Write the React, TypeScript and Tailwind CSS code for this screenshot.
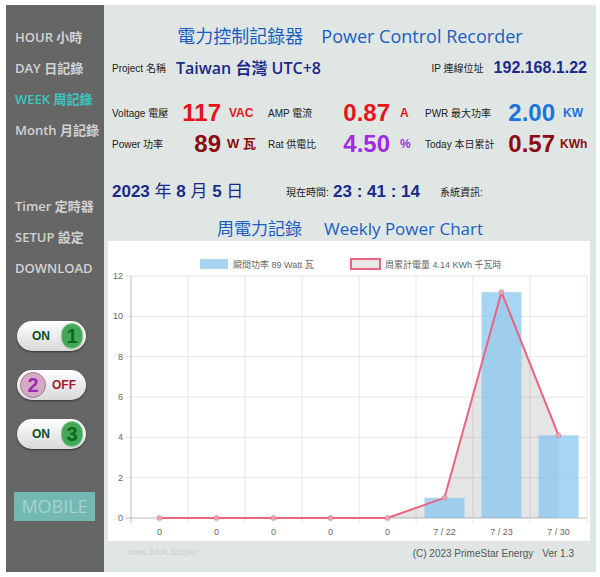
import React from 'react';

const cjk = '"Noto Sans CJK TC"';
const sans = { fontFamily: `"Open Sans", ${cjk}, sans-serif` };
const arial = { fontFamily: `"Liberation Sans", ${cjk}, sans-serif` };

const menuTop = [
  { label: 'HOUR 小時' },
  { label: 'DAY 日記錄' },
  { label: 'WEEK 周記錄', active: true },
  { label: 'Month 月記錄' },
];
const menuBottom = ['Timer 定時器', 'SETUP 設定', 'DOWNLOAD'];

function Toggle({ n, on }: { n: number; on: boolean }) {
  return (
    <div
      className="flex h-[30px] w-[69px] items-center rounded-full bg-gradient-to-b from-white to-[#d9d9d9] shadow-[0_1px_2px_rgba(0,0,0,0.5)] px-[3px]"
      style={arial}
    >
      {on ? (
        <>
          <span className="ml-[12px] w-[35px] text-[12px] font-bold text-[#0f4d1f]">ON</span>
          <span className="flex h-[26px] w-[26px] items-center justify-center rounded-full border border-[#8bc79a] bg-[#43a857] text-[20px] font-bold text-[#0b6a1b]">
            {n}
          </span>
        </>
      ) : (
        <>
          <span className="flex h-[26px] w-[26px] items-center justify-center rounded-full border border-[#9d7d93] bg-[#d6a9c6] text-[20px] font-bold text-[#9a2bb0]">
            {n}
          </span>
          <span className="ml-[6px] text-[12px] font-bold text-[#a01b2c]">OFF</span>
        </>
      )}
    </div>
  );
}

function Metric({
  label,
  labelW,
  value,
  valueW,
  unit,
  unitMl,
  unitW,
  color,
  unitSize = 'text-[12px]',
}: {
  label: string;
  labelW: string;
  value: string;
  valueW: string;
  unit: string;
  unitMl: string;
  unitW: string;
  color: string;
  unitSize?: string;
}) {
  return (
    <div className="flex items-center">
      <span className={`${labelW} text-[10px] text-[#222]`}>{label}</span>
      <span className={`${valueW} text-right text-[24px] font-bold leading-none ${color}`}>{value}</span>
      <span className={`${unitMl} ${unitW} ${unitSize} font-bold ${color}`}>{unit}</span>
    </div>
  );
}

const X0 = 23;
const STEP = 57;
const Y0 = 277;
const PER = (277 - 35) / 12;
const yOf = (v: number) => Y0 - v * PER;
const cx = (i: number) => X0 + STEP / 2 + i * STEP;

const labels = ['0', '0', '0', '0', '0', '7 / 22', '7 / 23', '7 / 30'];
const bars = [0, 0, 0, 0, 0, 1, 11.2, 4.1];
const line = [0, 0, 0, 0, 0, 1, 11.2, 4.1];

function Chart() {
  const pts = line.map((v, i) => `${cx(i)},${yOf(v)}`).join(' ');
  const area = `${cx(0)},${Y0} ${pts} ${cx(7)},${Y0}`;
  return (
    <svg width="482" height="300" className="block" style={arial}>
      <rect x="92" y="18" width="28" height="10" fill="#a9d5f5" />
      <text x="125" y="27" fontSize="9" fill="#666">瞬間功率 89 Watt 瓦</text>
      <rect x="243" y="18" width="29" height="10" fill="#e8e8e8" stroke="#e8647f" strokeWidth="2" />
      <text x="277" y="27" fontSize="9" fill="#666">周累計電量 4.14 KWh 千瓦時</text>

      {Array.from({ length: 7 }).map((_, k) => (
        <g key={k}>
          <line x1={X0 - 5} x2={X0 + STEP * 8} y1={yOf(k * 2)} y2={yOf(k * 2)} stroke={k === 0 ? '#bbb' : '#e6e6e6'} />
          <text x={X0 - 8} y={yOf(k * 2) + 3} fontSize="9" fill="#666" textAnchor="end">
            {k * 2}
          </text>
        </g>
      ))}
      {Array.from({ length: 9 }).map((_, i) => (
        <line key={i} x1={X0 + i * STEP} x2={X0 + i * STEP} y1={35} y2={Y0 + 5} stroke={i === 0 ? '#bbb' : '#e6e6e6'} />
      ))}

      <polygon points={area} fill="rgba(0,0,0,0.1)" />
      {bars.map((v, i) =>
        v > 0 ? (
          <rect key={i} x={cx(i) - 20} y={yOf(v)} width="40" height={Y0 - yOf(v)} fill="rgba(130,195,240,0.7)" />
        ) : null
      )}
      <polyline points={pts} fill="none" stroke="#e8647f" strokeWidth="2" />
      {line.map((v, i) => (
        <circle key={i} cx={cx(i)} cy={yOf(v)} r="2.5" fill="#eaa6b6" stroke="#e8647f" strokeWidth="0.5" />
      ))}
      {labels.map((l, i) => (
        <text key={i} x={cx(i)} y={Y0 + 17} fontSize="9" fill="#666" textAnchor="middle">
          {l}
        </text>
      ))}
    </svg>
  );
}

export default function App() {
  return (
    <div className="h-[577px] w-[600px] bg-white pl-[6px] pt-[5px]">
      <div className="flex h-[567px] w-[590px]">
        {/* Sidebar */}
        <div className="flex w-[98px] flex-col bg-[#666666] pl-[9px]" style={sans}>
          <div className="mt-[22px] flex flex-col gap-[10px]">
            {menuTop.map((m) => (
              <div
                key={m.label}
                className={`h-[21px] text-[13px] font-semibold leading-[21px] ${m.active ? 'text-[#3cc7c0]' : 'text-[#d2d2d2]'}`}
              >
                {m.label}
              </div>
            ))}
          </div>
          <div className="mt-[55px] flex flex-col gap-[10px]">
            {menuBottom.map((m) => (
              <div key={m} className="h-[21px] text-[13px] font-semibold leading-[21px] text-[#d2d2d2]">
                {m}
              </div>
            ))}
          </div>
          <div className="ml-[2px] mt-[42px] flex flex-col gap-[19px]">
            <Toggle n={1} on />
            <Toggle n={2} on={false} />
            <Toggle n={3} on />
          </div>
          <div className="ml-[-1px] mt-[43px] flex h-[29px] w-[81px] items-center justify-center bg-[#74b8b2] text-[18px] text-[#a6d4d0]">
            MOBILE
          </div>
        </div>

        {/* Main */}
        <div className="flex w-[492px] flex-col bg-[#dfe6e4]">
          <div className="mt-[19px] flex h-[24px] items-center justify-center text-[18px] text-[#1a5ec2]" style={sans}>
            電力控制記錄器<span className="ml-[18px]">Power Control Recorder</span>
          </div>

          <div className="mt-[8px] flex h-[24px] items-center justify-between pl-[8px] pr-[9px]">
            <div className="flex items-center">
              <span className="w-[64px] text-[10px] text-[#222]" style={arial}>Project 名稱</span>
              <span className="text-[16px] font-semibold text-[#1c2a8a]" style={sans}>Taiwan 台灣 UTC+8</span>
            </div>
            <div className="flex items-center" style={arial}>
              <span className="w-[62px] text-[10px] text-[#222]">IP 連線位址</span>
              <span className="text-[16px] font-bold text-[#1c2a8a]">192.168.1.22</span>
            </div>
          </div>

          <div className="mt-[19px] flex h-[28px] items-center pl-[8px]" style={arial}>
            <Metric label="Voltage 電壓" labelW="w-[64px]" value="117" valueW="w-[45px]" unit="VAC" unitMl="ml-[8px]" unitW="w-[39px]" color="text-[#e8141c]" />
            <Metric label="AMP 電流" labelW="w-[64px]" value="0.87" valueW="w-[58px]" unit="A" unitMl="ml-[10px]" unitW="w-[25px]" color="text-[#e8141c]" />
            <Metric label="PWR 最大功率" labelW="w-[75px]" value="2.00" valueW="w-[55px]" unit="KW" unitMl="ml-[8px]" unitW="w-[25px]" color="text-[#1a73e0]" />
          </div>

          <div className="mt-[3px] flex h-[28px] items-center pl-[8px]" style={arial}>
            <Metric label="Power 功率" labelW="w-[64px]" value="89" valueW="w-[45px]" unit="W 瓦" unitMl="ml-[6px]" unitW="w-[41px]" color="text-[#8b0c12]" unitSize="text-[13px]" />
            <Metric label="Rat 供電比" labelW="w-[64px]" value="4.50" valueW="w-[58px]" unit="%" unitMl="ml-[10px]" unitW="w-[25px]" color="text-[#a12be0]" />
            <Metric label="Today 本日累計" labelW="w-[75px]" value="0.57" valueW="w-[55px]" unit="KWh" unitMl="ml-[5px]" unitW="w-[30px]" color="text-[#8b0c12]" />
          </div>

          <div className="mt-[22px] flex h-[24px] items-center pl-[8px]" style={arial}>
            <span className="w-[174px] text-[17px] font-bold text-[#1c2a8a]">
              2023 <span className="font-normal">年</span> 8 <span className="font-normal">月</span> 5 <span className="font-normal">日</span>
            </span>
            <span className="w-[47px] whitespace-nowrap text-[10px] text-[#222]">現在時間:</span>
            <span className="w-[107px] whitespace-nowrap text-[17px] font-bold text-[#1c2a8a]">23 : 41 : 14</span>
            <span className="whitespace-nowrap text-[10px] text-[#222]">系統資訊:</span>
          </div>

          <div className="mt-[13px] flex h-[24px] items-center justify-center text-[17px] text-[#1a5ec2]" style={sans}>
            周電力記錄<span className="ml-[22px]">Weekly Power Chart</span>
          </div>

          <div className="ml-[4px] h-[300px] w-[482px] bg-white">
            <Chart />
          </div>

          <div className="flex h-[24px] items-center justify-between pl-[23px] pr-[22px] text-[9px]" style={arial}>
            <span className="text-[#c9d1cf]">www.3dok.biz/pec</span>
            <span className="text-[10px] text-[#555]">
              (C) 2023 PrimeStar Energy<span className="ml-[9px]">Ver 1.3</span>
            </span>
          </div>
        </div>
      </div>
    </div>
  );
}
